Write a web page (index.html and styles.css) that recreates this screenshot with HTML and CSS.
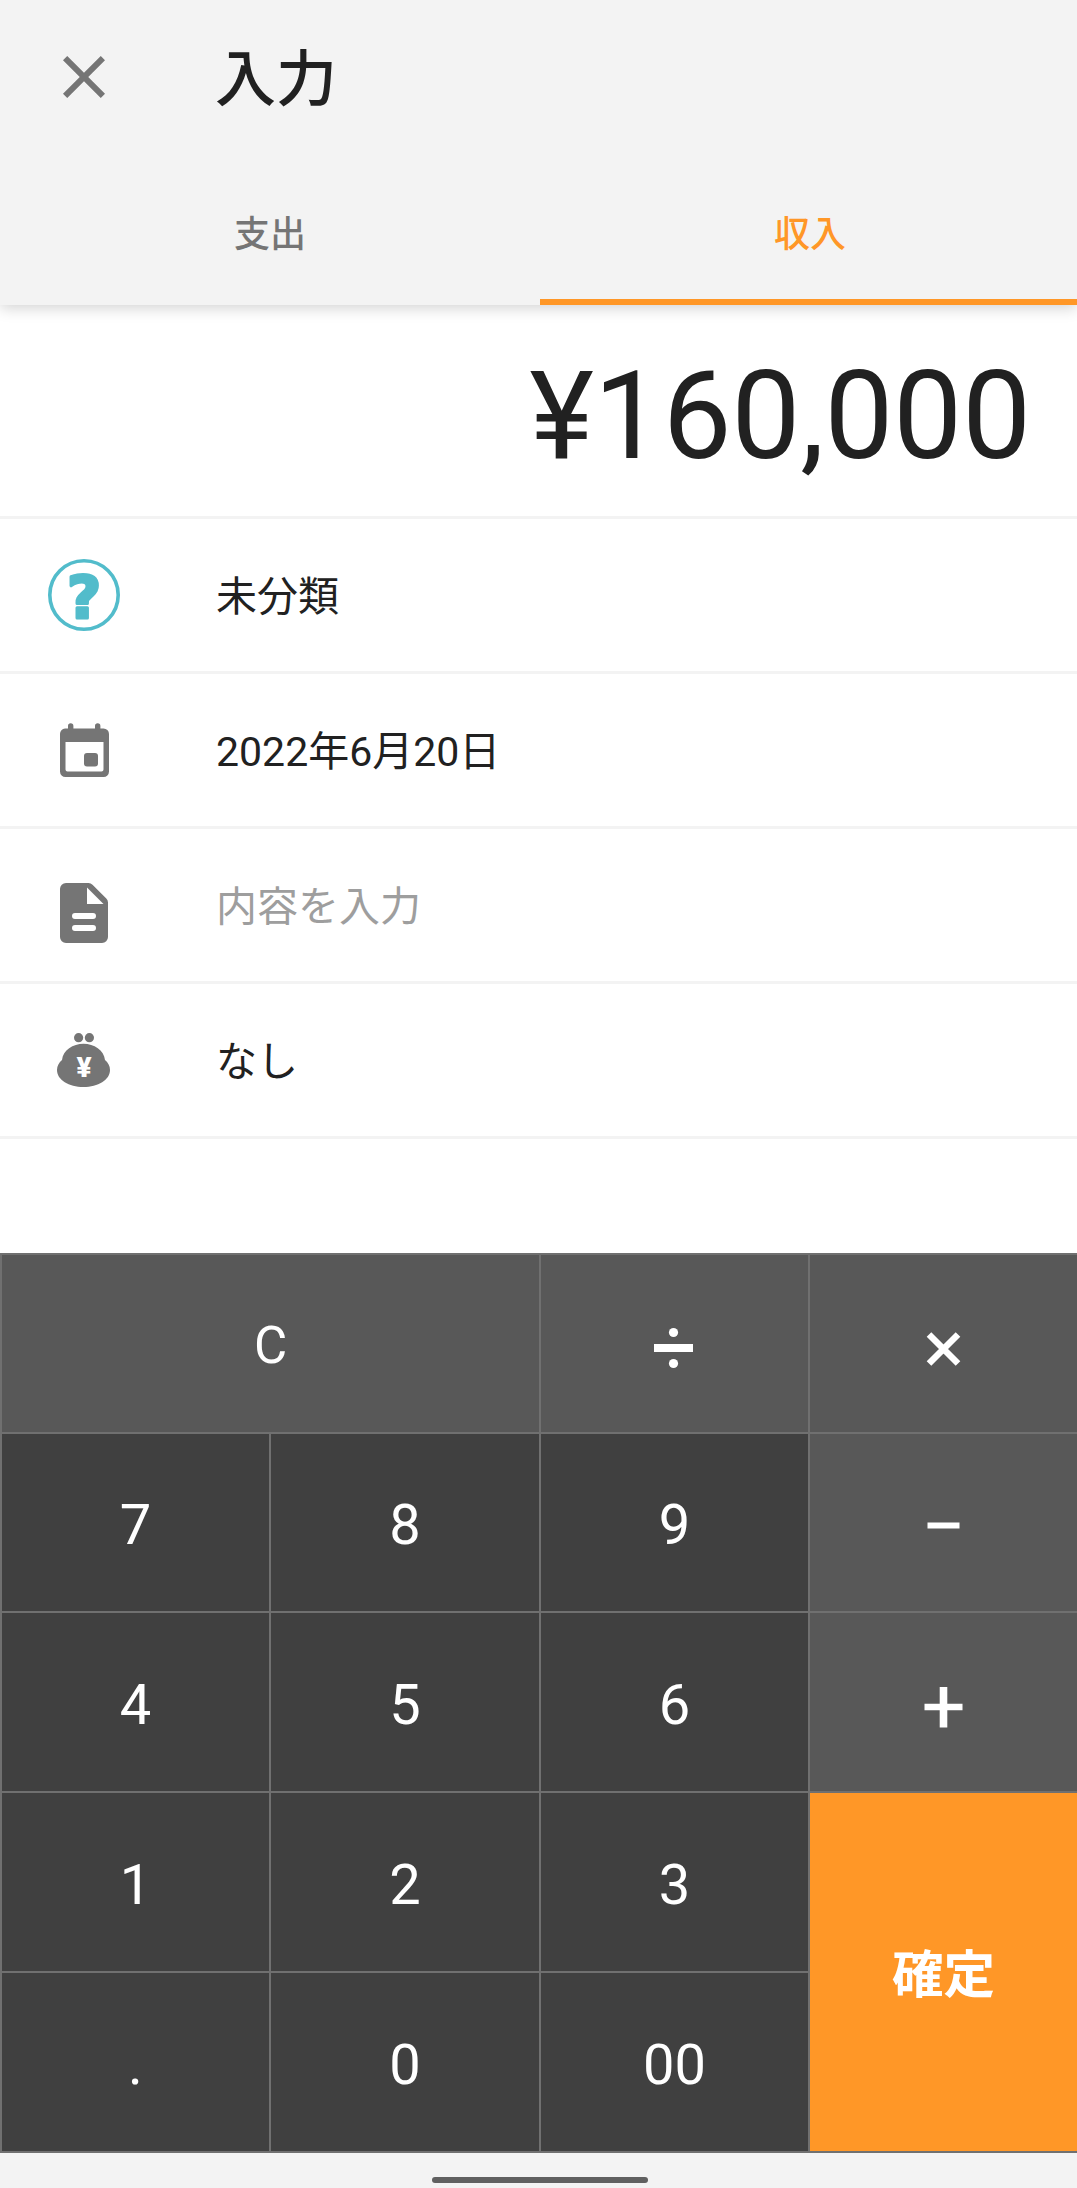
FILE: index.html
```html
<!DOCTYPE html>
<html lang="ja">
<head>
  <meta charset="UTF-8">
  <meta name="viewport" content="width=device-width, initial-scale=1.0">
  <title>入力</title>
  <link rel="stylesheet" href="styles.css">
</head>
<body>
  <div class="screen">
    <header class="header">
      <div class="title-bar">
        <button class="close" type="button" aria-label="閉じる">
          <svg class="icon" viewBox="0 0 24 24"><path fill="currentColor" d="M19 6.41L17.59 5 12 10.59 6.41 5 5 6.41 10.59 12 5 17.59 6.41 19 12 13.41 17.59 19 19 17.59 13.41 12z"/></svg>
        </button>
        <h1>入力</h1>
      </div>
      <nav class="tabs">
        <a class="tab">支出</a>
        <a class="tab active">収入</a>
      </nav>
    </header>

    <main class="form">
      <div class="amount">¥160,000</div>

      <div class="row">
        <svg class="icon category" viewBox="0 0 72 72">
          <circle cx="36" cy="36" r="34.2" fill="none" stroke="currentColor" stroke-width="3.6"/>
          <text class="category-mark" x="36" y="58.500" text-anchor="middle">?</text>
        </svg>
        <span class="value">未分類</span>
      </div>

      <div class="row">
        <svg class="icon" viewBox="0 0 72 72">
          <path fill="currentColor" fill-rule="evenodd" d="M17 14.500H20V12a2.700 2.700 0 0 1 5.400 0v2.500H47V12a2.700 2.700 0 0 1 5.400 0v2.500H55.500a5.500 5.500 0 0 1 5.500 5.500v37.500a5.500 5.500 0 0 1-5.500 5.500h-38a5.500 5.500 0 0 1-5.500-5.500V20a5.500 5.500 0 0 1 5-5.500zM17.500 28v27.500a2 2 0 0 0 2 2h34a2 2 0 0 0 2-2V28z"/>
          <rect x="36" y="39" width="14" height="13.400" rx="3" fill="currentColor"/>
        </svg>
        <span class="value">2022年6月20日</span>
      </div>

      <div class="row">
        <svg class="icon memo" viewBox="0 0 72 72">
          <path fill="currentColor" fill-rule="evenodd" d="M18 6H40.500a6 6 0 0 1 4 1.700L58.300 21.500a6 6 0 0 1 1.700 4V60a6 6 0 0 1-6 6H18a6 6 0 0 1-6-6V12a6 6 0 0 1 6-6zM39 10.500V27H55.500z"/>
          <path d="M27 39H45M27 51H45" stroke="#fff" stroke-width="6" stroke-linecap="round"/>
        </svg>
        <span class="value placeholder">内容を入力</span>
      </div>

      <div class="row">
        <svg class="icon" viewBox="0 0 72 72">
          <g fill="currentColor">
            <circle cx="30.600" cy="13.700" r="4.600"/>
            <circle cx="41.400" cy="13.700" r="4.600"/>
            <path d="M35.500 19.700C46 19.700 56 26 57 36C60 38.500 62 42 62 46C62 56 50 63 35.500 63C21 63 9 56 9 46C9 42 11 38.500 14 36C15 26 25 19.700 35.500 19.700z"/>
          </g>
          <text class="yen" x="36" y="52.500" text-anchor="middle">¥</text>
        </svg>
        <span class="value">なし</span>
      </div>
    </main>

    <div class="keypad">
      <button class="key op clear" type="button">C</button>
      <button class="key op" type="button" aria-label="÷">
        <svg class="sign" viewBox="0 0 48 48"><path fill="#fff" d="M4 20H43V28H4z"/><circle cx="23.500" cy="8.500" r="4.600" fill="#fff"/><circle cx="23.500" cy="39.500" r="4.600" fill="#fff"/></svg>
      </button>
      <button class="key op" type="button" aria-label="×">
        <svg class="sign" viewBox="0 0 48 48"><path d="M10 10.500L39 39.500M39 10.500L10 39.500" stroke="#fff" stroke-width="6.500"/></svg>
      </button>
      <button class="key" type="button">7</button>
      <button class="key" type="button">8</button>
      <button class="key" type="button">9</button>
      <button class="key op" type="button" aria-label="−">
        <svg class="sign" viewBox="0 0 48 48"><path d="M8.500 22.500H40.500" stroke="#fff" stroke-width="6"/></svg>
      </button>
      <button class="key" type="button">4</button>
      <button class="key" type="button">5</button>
      <button class="key" type="button">6</button>
      <button class="key op" type="button" aria-label="+">
        <svg class="sign" viewBox="0 0 48 48"><path d="M5.500 24H43.500" stroke="#fff" stroke-width="6.600"/><path d="M24.500 4V44.500" stroke="#fff" stroke-width="7.600"/></svg>
      </button>
      <button class="key" type="button">1</button>
      <button class="key" type="button">2</button>
      <button class="key" type="button">3</button>
      <button class="key submit" type="button">確定</button>
      <button class="key" type="button">.</button>
      <button class="key" type="button">0</button>
      <button class="key" type="button">00</button>
    </div>

    <footer class="nav-bar"><div class="handle"></div></footer>
  </div>
</body>
</html>
```

FILE: styles.css
```css
:root {
  --accent: #ff9727;
  --surface: #f3f3f3;
  --text: #212121;
  --icon: #757575;
  --key: #404040;
  --key-op: #585858;
  --key-line: #707070;
}

* {
  box-sizing: border-box;
}

body {
  margin: 0;
  background: white;
  color: var(--text);
  font-family: Roboto, "Noto Sans CJK JP", sans-serif;
}

.screen {
  display: flex;
  flex-direction: column;
  height: 2188px;
}

button {
  border: none;
  padding: 0;
  background: none;
  color: inherit;
  font-family: inherit;
}

.icon {
  display: block;
  width: 72px;
  height: 72px;
  color: var(--icon);
}

/* Header */
.header {
  height: 305px;
  background: var(--surface);
  box-shadow: 0 3px 14px rgba(0, 0, 0, 0.18);
}

.title-bar {
  display: flex;
  align-items: center;
  gap: 95px;
  height: 154px;
  padding-left: 48px;
}

h1 {
  margin: 0;
  padding-top: 5px;
  font-size: 61px;
  font-weight: 500;
  line-height: 72px;
}

.tabs {
  display: grid;
  grid-template-columns: 540px 1fr;
  height: 151px;
}

.tab {
  display: flex;
  align-items: center;
  justify-content: center;
  padding-top: 8px;
  border-bottom: 6px solid transparent;
  color: var(--icon);
  font-size: 36px;
  font-weight: 500;
}

.tab.active {
  padding-left: 3px;
  color: var(--accent);
  border-color: var(--accent);
}

/* Form */
.form {
  flex: 1;
}

.amount {
  height: 214px;
  padding: 0 46px;
  border-bottom: 3px solid var(--surface);
  font-size: 122.5px;
  line-height: 223px;
  text-align: right;
}

.row {
  display: flex;
  align-items: center;
  gap: 96px;
  height: 155px;
  padding-left: 48px;
  border-bottom: 3px solid var(--surface);
  font-size: 41px;
  line-height: 60px;
}

.value {
  padding-top: 4px;
}

.category {
  color: #52bccb;
}

.category-mark {
  fill: currentColor;
  stroke: currentColor;
  stroke-width: 3px;
  stroke-linejoin: round;
  font-family: "DejaVu Sans", sans-serif;
  font-size: 59px;
  font-weight: 700;
}

.memo {
  margin-top: 16px;
}

.yen {
  fill: white;
  font-size: 28px;
  font-weight: 900;
}

.placeholder {
  color: #9e9e9e;
}

/* Keypad */
.keypad {
  display: grid;
  grid-template-columns: 267px 268px 267px 267px;
  grid-template-rows: 177px 177px 178px 178px 178px;
  gap: 2px;
  padding: 2px 0 2px 2px;
  background: var(--key-line);
}

.key {
  display: flex;
  align-items: center;
  justify-content: center;
  padding-top: 5px;
  background: var(--key);
  color: white;
  font-size: 56px;
}

.op {
  padding: 9px 1px 0 0;
  background: var(--key-op);
}

.clear {
  grid-column: span 2;
  padding: 4px 0 0;
  font-size: 51px;
}

.sign {
  width: 48px;
  height: 48px;
  fill: none;
}

.submit {
  grid-row: span 2;
  padding: 0 0 3px;
  background: var(--accent);
  font-size: 51.5px;
  font-weight: 700;
}

.nav-bar {
  display: flex;
  justify-content: center;
  height: 35px;
  padding-top: 24px;
  background: var(--surface);
}

.handle {
  width: 216px;
  height: 6px;
  margin-left: 3px;
  border-radius: 3px;
  background: #606060;
}
```
